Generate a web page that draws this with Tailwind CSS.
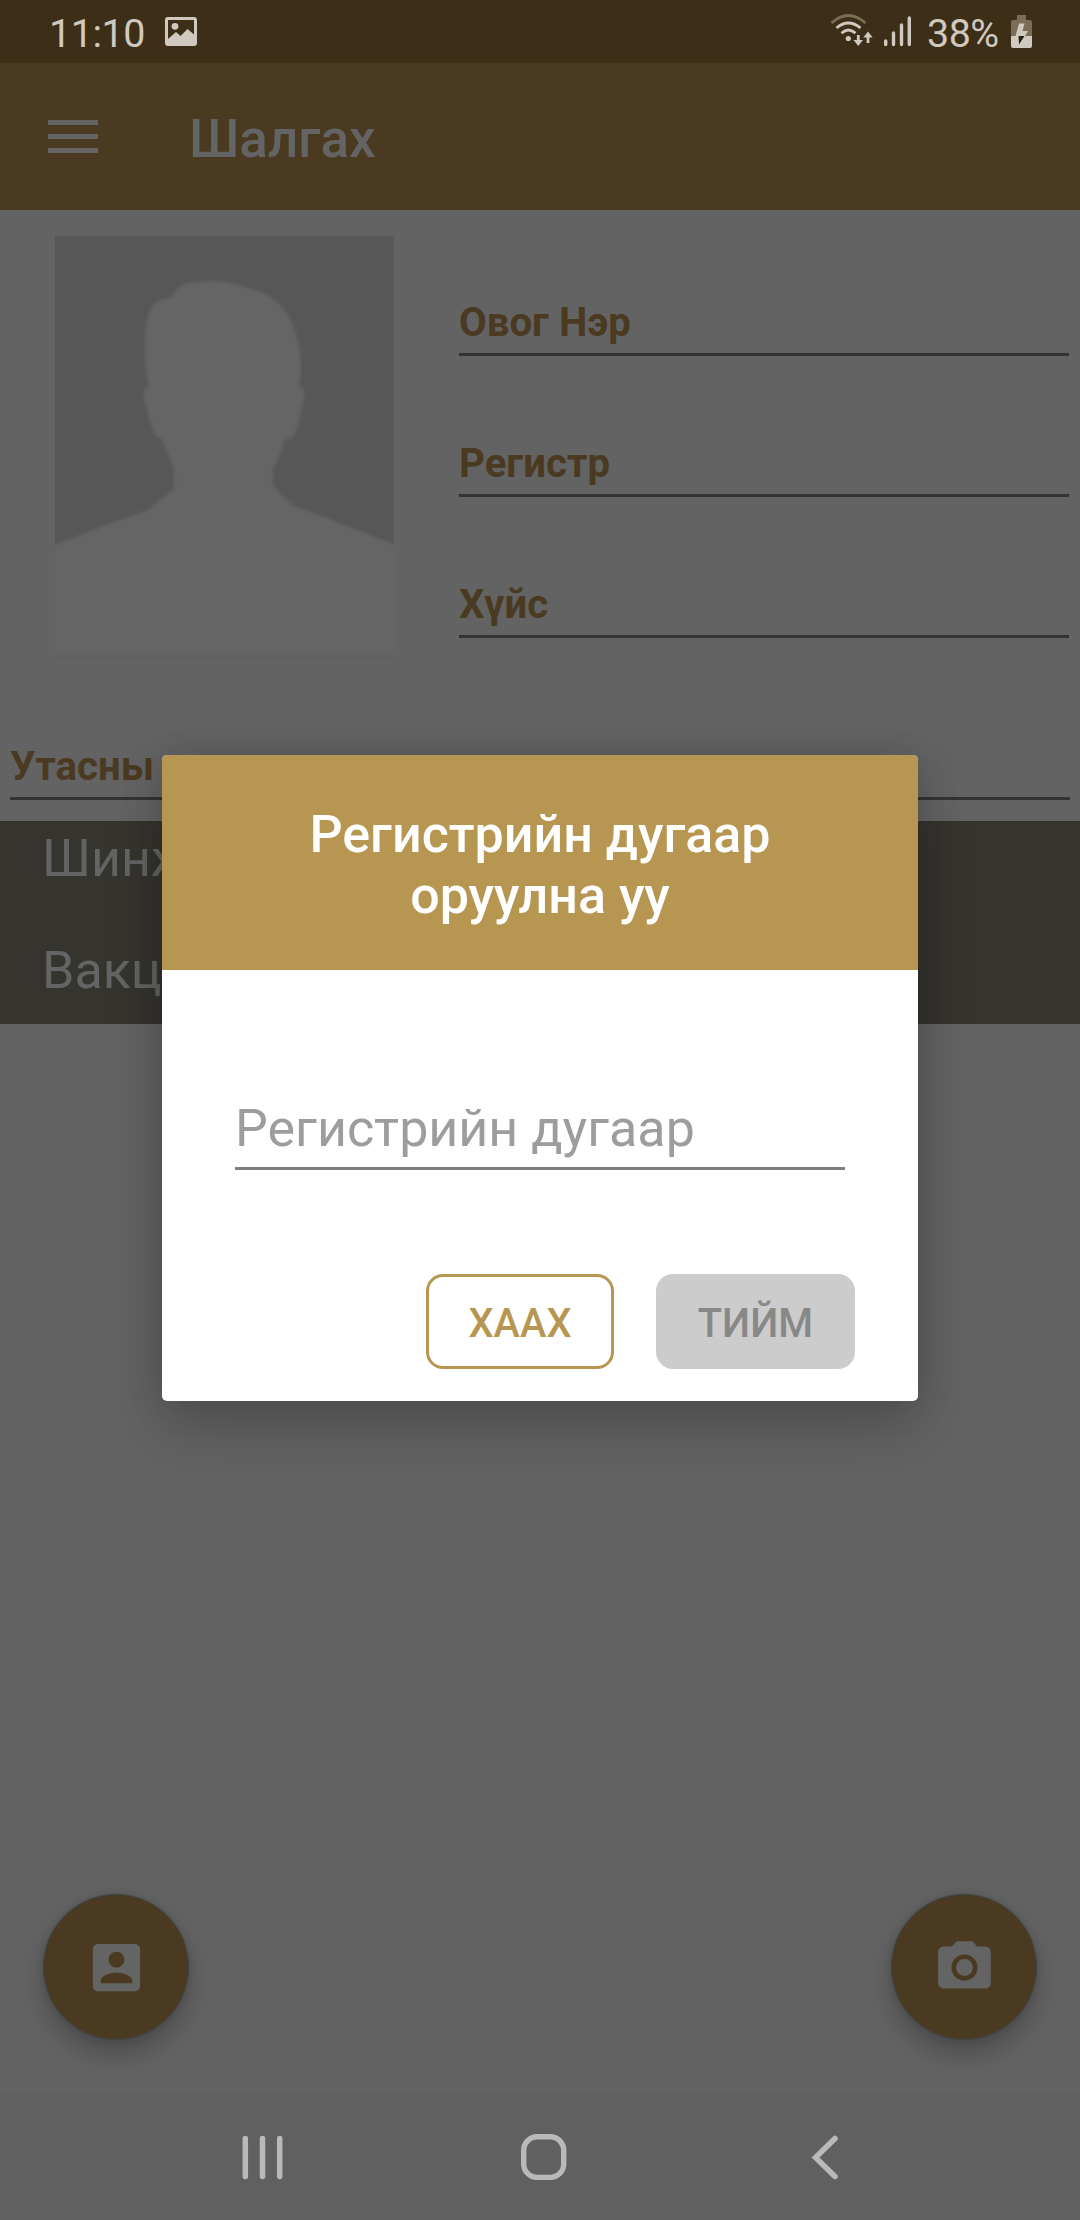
<!DOCTYPE html>
<html lang="mn">
<head>
<meta charset="utf-8">
<title>Шалгах</title>
<script src="https://cdn.jsdelivr.net/npm/@tailwindcss/browser@4"></script>
</head>
<body class="bg-[#636363] font-['Roboto',sans-serif]">
<div class="relative flex h-[2220px] w-[1080px] flex-col overflow-hidden bg-[#636363]">

  <!-- Status bar -->
  <header class="flex h-[63px] shrink-0 items-start bg-[#3d2e17] pl-[49px] text-[39.4px] leading-[67px] text-[#cfc9bf]">
    <span class="w-[116px] tracking-[-0.4px]">11:10</span>
    <svg class="mt-[17px] h-[29px] w-8" viewBox="0 0 32 29" fill="none">
      <path fill="#cfc9bf" fill-rule="evenodd" d="M3 0H29Q32 0 32 3V26Q32 29 29 29H3Q0 29 0 26V3Q0 0 3 0ZM3 3V22L11 15L15.500 19L22.500 12L29 17.500V3Z"/>
      <circle cx="10" cy="9.300" r="3.400" fill="#cfc9bf"/>
    </svg>
    <svg class="ml-[632px] h-[63px] w-[100px] shrink-0" viewBox="828 0 100 63" fill="none" stroke="#cfc9bf" stroke-linecap="round">
      <path stroke="#7b6d57" stroke-width="2.800" stroke-linecap="butt" d="M830.500 23Q847.300 8 864.500 23"/>
      <path stroke-width="2.900" stroke-linecap="butt" d="M835.500 28Q847.300 18 859.500 28M840.500 33.200Q847.300 27 854.500 33.200"/>
      <circle cx="847.300" cy="38.500" r="2.600" fill="#cfc9bf" stroke="none"/>
      <path stroke-width="2.800" stroke-linecap="butt" d="M857.300 35V42M867 43V36"/>
      <path fill="#cfc9bf" stroke="none" d="M852.500 40H862L857.300 46ZM862.300 37.500H871.700L867 31.500Z"/>
      <path stroke-width="3.400" d="M884.700 41V44.500M892.500 33V44.500M900.500 25V44.500M908.300 18V44.500"/>
    </svg>
    <span class="-ml-[2px] w-[84px] tracking-[-0.5px]">38%</span>
    <svg class="mt-[15px] h-[33px] w-[21px] shrink-0" viewBox="0 0 21 33">
      <path fill="#7b6d57" d="M6 0H15V5H19Q21 5 21 7V21H0V7Q0 5 2 5H6Z"/>
      <path fill="#cfc9bf" d="M0 21H21V31Q21 33 19 33H2Q0 33 0 31Z"/>
      <path fill="#cfc9bf" d="M8 8.500H13.500L11.500 16H17L14 21H4.500Z"/>
      <path fill="#2b2010" d="M7.500 21H13.500L8 29.500Z"/>
    </svg>
  </header>

  <!-- App bar -->
  <div class="flex h-[147px] shrink-0 items-center bg-[#493a21] pl-12">
    <div class="flex w-[141px] flex-col gap-[8.500px]">
      <i class="h-[5.500px] w-[50px] bg-[#646464]"></i>
      <i class="h-[5.500px] w-[50px] bg-[#646464]"></i>
      <i class="h-[5.500px] w-[50px] bg-[#646464]"></i>
    </div>
    <h1 class="pt-[4px] text-[53px] leading-[62px] font-medium text-[#646464]">Шалгах</h1>
  </div>

  <!-- Photo and personal data -->
  <section class="flex h-[532px] shrink-0 pl-[55px]">
    <svg class="mt-[26px] h-[423px] w-[339px] shrink-0" viewBox="0 0 339 423">
      <defs><filter id="soft" x="-5%" y="-5%" width="110%" height="110%"><feGaussianBlur stdDeviation="1.600"/></filter></defs>
      <rect width="339" height="423" fill="#575757"/>
      <path filter="url(#soft)" fill="#656565" d="M-6 311L62 285C80 279 94 274 100 269C106 261 113 259 119 252V232C115 220 110 214 107 203L101 200C95 188 90 168 88.500 158Q88.500 153 94 151C89 130 89 100 92 84C95 72 99 67 106 64L117 61Q121 52 130 48C140 45 165 44 178 48C195 52 209 55 222 66C238 79 246 110 246 130Q246 142 243 150Q249 151 250 158C246 172 245 188 239 200L229 205C227 215 222 225 218 232V249Q227 260 239 270L277 284L345 311V430H-6Z"/>
      <rect y="419" width="339" height="4" fill="#616161"/>
    </svg>
    <div class="ml-[65px] flex w-[610px] flex-col gap-[83px] pt-[88px] text-[40.2px] leading-[47px] font-bold text-[#493a21]">
      <div class="border-b-[3px] border-[#343434] pt-px pb-[7px]">Овог Нэр</div>
      <div class="border-b-[3px] border-[#343434] pt-px pb-[7px]">Регистр</div>
      <div class="border-b-[3px] border-[#343434] pt-px pb-[7px]">Хүйс</div>
    </div>
  </section>
  <div class="mx-[10px] h-[58px] shrink-0 border-b-[3px] border-[#343434] pt-px text-[40.2px] leading-[47px] font-bold text-[#493a21]">Утасны</div>
  <section class="mt-[21px] flex h-[203px] shrink-0 flex-col gap-[50px] bg-[#36342f] pt-[7px] pl-[42px] text-[52px] leading-[62px] text-[#646464]">
    <div>Шинж</div>
    <div>Вакц</div>
  </section>

  <!-- Floating buttons -->
  <div class="flex flex-1 items-end justify-between px-[43px] pb-[54px]">
    <button class="flex size-[146px] items-center justify-center rounded-full border border-[#3f4443] bg-[#493a21] shadow-[0_14px_26px_rgba(0,0,0,0.24),0_0_6px_rgba(0,0,0,0.12)]">
      <svg class="size-[63px]" viewBox="0 0 24 24" fill="#646464"><path d="M3 5v14c0 1.100.890 2 2 2h14c1.100 0 2-.900 2-2V5c0-1.100-.900-2-2-2H5c-1.110 0-2 .900-2 2zm12 4c0 1.660-1.340 3-3 3s-3-1.340-3-3 1.340-3 3-3 3 1.340 3 3zm-9 8c0-2 4-3.100 6-3.100s6 1.100 6 3.100v1H6v-1z"/></svg>
    </button>
    <button class="flex size-[146px] items-center justify-center rounded-full border border-[#3f4443] bg-[#493a21] shadow-[0_14px_26px_rgba(0,0,0,0.24),0_0_6px_rgba(0,0,0,0.12)]">
      <svg class="size-[63px]" viewBox="0 0 24 24" fill="#646464"><circle cx="12" cy="12" r="3.200"/><path d="M9 2L7.170 4H4c-1.100 0-2 .900-2 2v12c0 1.100.900 2 2 2h16c1.100 0 2-.900 2-2V6c0-1.100-.900-2-2-2h-3.170L15 2H9zm3 15c-2.760 0-5-2.240-5-5s2.240-5 5-5 5 2.240 5 5-2.240 5-5 5z"/></svg>
    </button>
  </div>

  <!-- Navigation bar -->
  <nav class="flex h-[126px] shrink-0 items-center bg-[#606060] pl-[242px]">
    <svg class="h-[46px] w-[600px]" viewBox="242 2134 600 46" fill="none" stroke="#b9b9b9">
      <path stroke-width="5.500" stroke-linecap="round" d="M245.300 2138.500V2176.500M262.500 2138.500V2176.500M279.700 2138.500V2176.500"/>
      <rect x="523.700" y="2136.800" width="40" height="40.600" rx="13.500" stroke-width="5.400"/>
      <path stroke-width="5.500" stroke-linecap="round" d="M835 2138.500L815.500 2157.500L835 2176.500"/>
    </svg>
  </nav>

  <!-- Dialog -->
  <div class="absolute top-[755px] left-[162px] flex h-[646px] w-[756px] flex-col overflow-hidden rounded-[5px] bg-white shadow-[0_30px_60px_rgba(0,0,0,0.18),0_0_40px_rgba(0,0,0,0.13)]">
    <h2 class="h-[215px] shrink-0 bg-[#b79651] pt-[49px] text-center text-[52px] leading-[61px] font-medium text-white">Регистрийн дугаар<br>оруулна уу</h2>
    <div class="mx-[73px] mt-[127px] h-[73px] shrink-0 border-b-[3px] border-[#7f7f7f] pt-px text-[52px] leading-[62px] text-[#9d9d9d]">Регистрийн дугаар</div>
    <div class="mt-[104px] flex h-[95px] justify-end gap-[42px] pr-[63px] text-[39.8px] font-medium">
      <button class="w-[188px] rounded-[17px] border-[3px] border-[#b79651] pt-[4px] text-[#b79651]">ХААХ</button>
      <button class="w-[199px] rounded-[17px] bg-[#ccc] pt-[4px] text-[#888]">ТИЙМ</button>
    </div>
  </div>
</div>
</body>
</html>
